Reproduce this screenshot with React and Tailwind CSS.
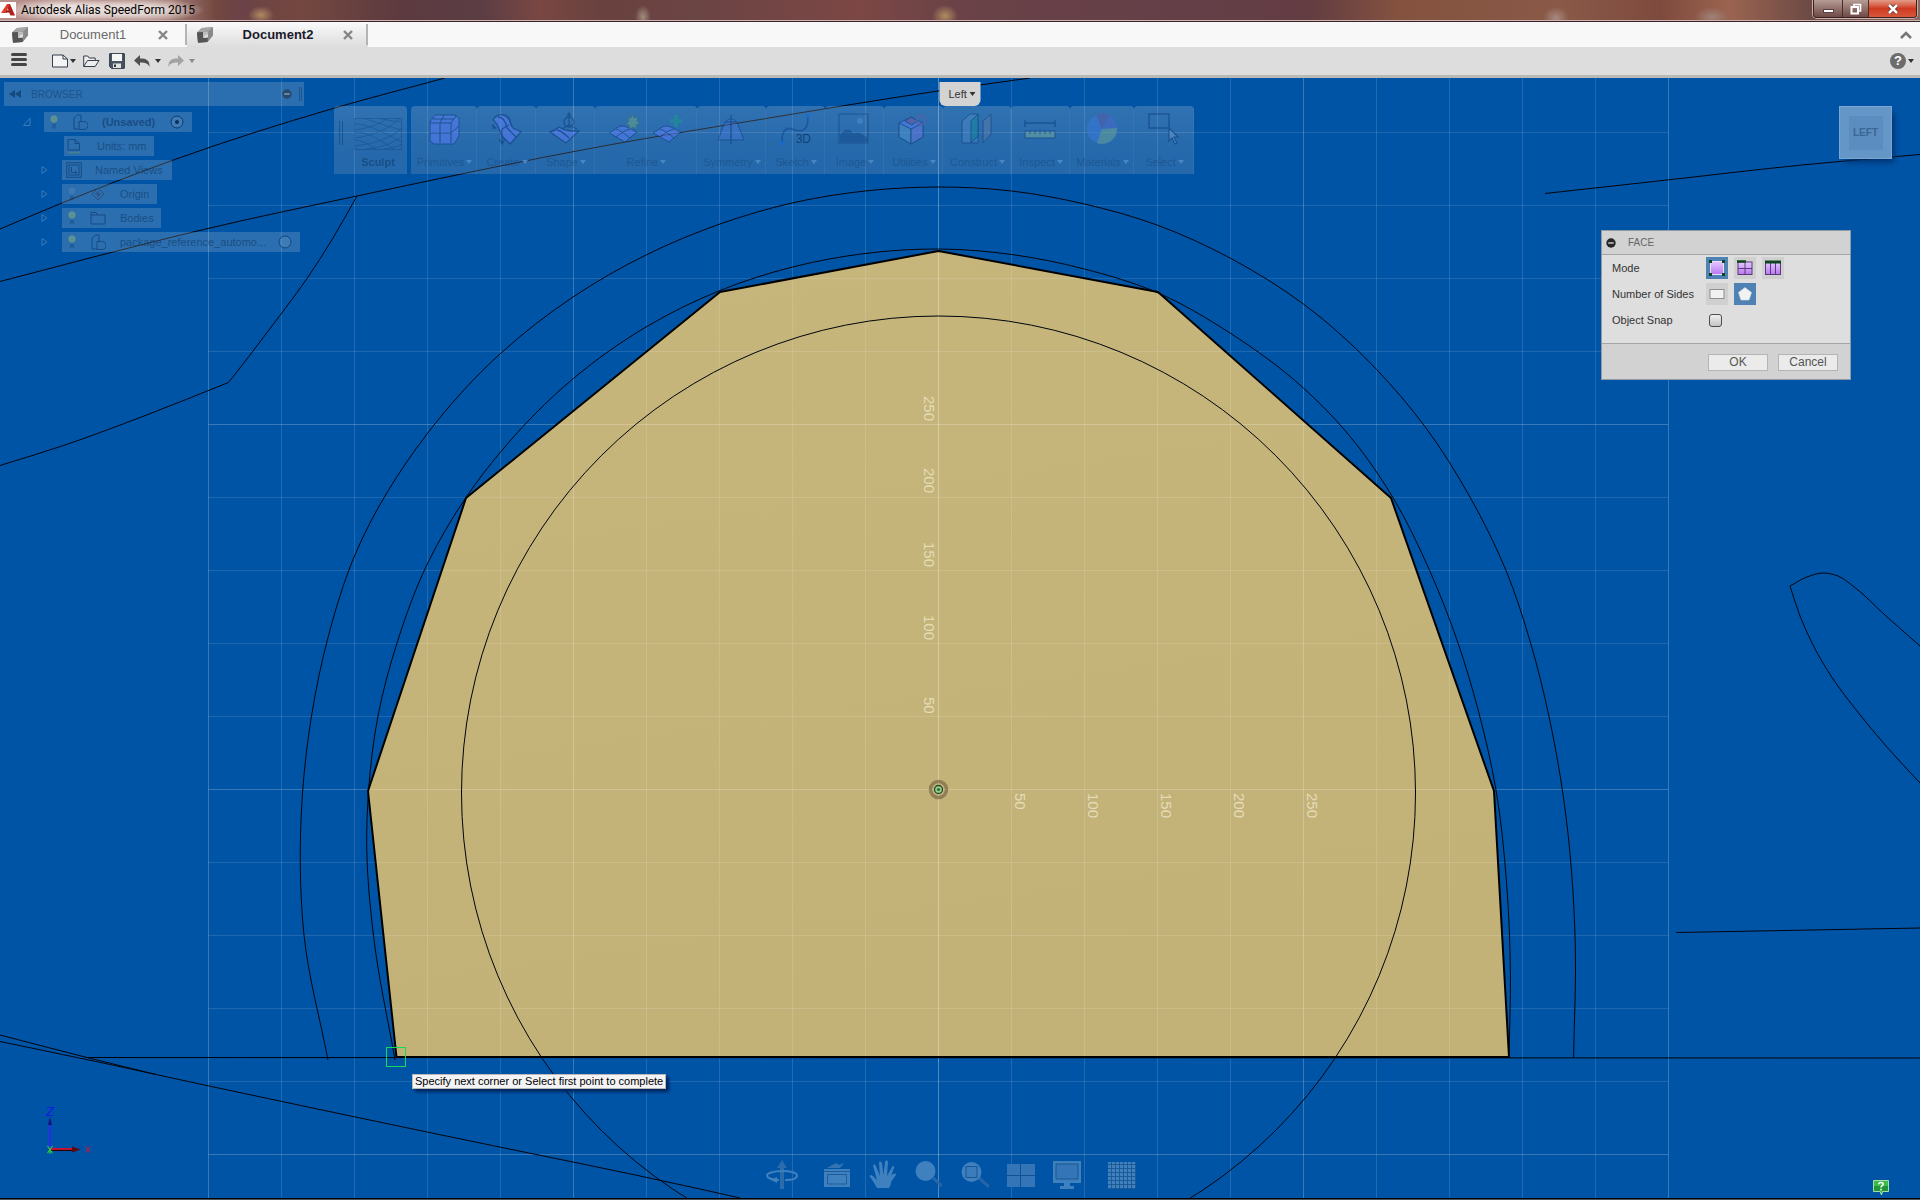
import React from "react";

/* ---------- geometry helpers ---------- */

// Smooth curve through a list of points, with tangents weighted by chord length.
function spline(points) {
  const n = points.length;
  const dist = (a, b) => Math.hypot(b[0] - a[0], b[1] - a[1]);
  const tangents = points.map((p, i) => {
    const prev = points[i - 1];
    const next = points[i + 1];
    if (!prev || !next) {
      const [a, b] = prev ? [prev, p] : [p, next];
      const d = dist(a, b);
      return [(b[0] - a[0]) / d, (b[1] - a[1]) / d];
    }
    const d1 = dist(prev, p);
    const d2 = dist(p, next);
    return [0, 1].map(
      (k) => (((p[k] - prev[k]) / d1) * d2 + ((next[k] - p[k]) / d2) * d1) / (d1 + d2)
    );
  });
  let d = `M${points[0][0]} ${points[0][1]}`;
  for (let i = 0; i < n - 1; i++) {
    const a = points[i];
    const b = points[i + 1];
    const s = dist(a, b) / 3;
    const ta = tangents[i];
    const tb = tangents[i + 1];
    d += ` C${a[0] + ta[0] * s} ${a[1] + ta[1] * s} ${b[0] - tb[0] * s} ${b[1] - tb[1] * s} ${b[0]} ${b[1]}`;
  }
  return d;
}

const ORIGIN = { x: 938.5, y: 789.5 };
const STEP = 73;

const OUTER_ARCH = [
  [328, 1060], [304, 935], [300.6, 833], [311.5, 716], [328.4, 636], [354.5, 556], [427, 434], [500.5, 353.5],
  [573, 297], [646, 255], [720, 224], [792, 203], [865, 191], [938.5, 187], [1011.6, 191], [1084.5, 204],
  [1157, 225], [1230, 258], [1303.4, 304], [1376.6, 369.5], [1426, 428], [1470.5, 498], [1506, 570.5],
  [1530.6, 643], [1549, 716.5], [1563.6, 798.5], [1575.3, 945], [1573.6, 1057.5],
];

const MIDDLE_ARCH = [
  [395, 1060], [373.4, 935], [366.7, 847], [368.6, 790], [378, 716], [397.8, 640.5], [427.3, 564], [467, 496],
  [500.5, 452], [573.4, 378.5], [646, 327], [720, 290.5], [792.6, 267], [865, 253.5], [938.5, 249], [1011.7, 254.5],
  [1084.5, 269], [1157, 292.5], [1230, 333], [1303.4, 388], [1342, 427], [1392.6, 497], [1429.6, 570.5],
  [1458, 643], [1478, 709.5], [1496, 790], [1506.5, 882], [1510.4, 973.5], [1509, 1057.5],
];

const SKETCH_CURVES = [
  [[0, 229], [62, 203], [172, 160.5], [333, 108.5], [445, 78]],
  [[0, 281.5], [82, 260], [210, 228], [357, 196], [606, 145.5], [760, 119.5], [938, 91], [1030, 78]],
  [[357, 196], [333, 238], [306, 280], [278, 318], [250, 355], [228.5, 382.5]],
  [[228.5, 382.5], [144, 416], [62, 446], [0, 465.5]],
  [[1545, 193.5], [1667, 180], [1807, 164.5], [1920, 154.5]],
  [[1790, 586], [1807, 577], [1823, 573], [1838, 576], [1853, 586], [1886, 616], [1920, 646]],
  [[1790, 586], [1800, 616], [1813, 645], [1833, 679], [1857, 711], [1886, 746], [1920, 783]],
  [[1676, 932.5], [1920, 928]],
  [[85, 1057.5], [1920, 1058]],
  [[0, 1035], [89, 1058], [156, 1074.5]],
  [[0, 1041.5], [103, 1063], [209, 1086], [427, 1132], [700, 1189], [740, 1198]],
];

const FACE_POINTS =
  "938.5,251 1158,292 1391,498 1494,791 1509,1057 396.5,1057 368,791 466,498 720,292";

const RULER_V = [
  ["250", 396], ["200", 468], ["150", 542], ["100", 615], ["50", 697],
];
const RULER_H = [
  ["50", 1015], ["100", 1088], ["150", 1161], ["200", 1234], ["250", 1307],
];

/* ---------- canvas ---------- */

function Scene() {
  const ticks = Array.from({ length: 21 }, (_, i) => i - 10);
  return (
    <svg
      className="block h-full w-full"
      viewBox="0 78 1920 1120"
      preserveAspectRatio="xMidYMid slice"
      fill="none"
      role="img"
      aria-label="Left view"
    >
      <defs>
        <linearGradient id="faceFill" x1="0" y1="0" x2="0.2" y2="1">
          <stop offset="0" stopColor="#c6b67b" />
          <stop offset="1" stopColor="#c3b277" />
        </linearGradient>
      </defs>
      <polygon points={FACE_POINTS} fill="url(#faceFill)" />
      <g stroke="#ffffff">
        {ticks.map((k) => (
          <line
            key={`v${k}`}
            x1={ORIGIN.x + k * STEP}
            x2={ORIGIN.x + k * STEP}
            y1="59.5"
            y2="1198"
            strokeOpacity={k === 0 ? 0.32 : k % 5 === 0 ? 0.22 : 0.13}
          />
        ))}
        {ticks.slice(0, 16).map((k) => (
          <line
            key={`h${k}`}
            x1={ORIGIN.x - 10 * STEP}
            x2={ORIGIN.x + 10 * STEP}
            y1={ORIGIN.y + k * STEP}
            y2={ORIGIN.y + k * STEP}
            strokeOpacity={k % 5 === 0 ? 0.22 : 0.12}
          />
        ))}
      </g>
      <g fill="#e4dcb8" fontFamily="'Liberation Sans', Arial, sans-serif" fontSize="15">
        {RULER_V.map(([t, y]) => (
          <text key={`rv${t}`} transform={`translate(924 ${y}) rotate(90)`}>{t}</text>
        ))}
        {RULER_H.map(([t, x]) => (
          <text key={`rh${t}`} transform={`translate(${x} 793) rotate(90)`}>{t}</text>
        ))}
      </g>
      <g stroke="#00040c" strokeWidth="1">
        <circle cx={ORIGIN.x} cy="793" r="477" />
        <path d={spline(OUTER_ARCH)} />
        <path d={spline(MIDDLE_ARCH)} />
        {SKETCH_CURVES.map((c, i) => (
          <path key={i} d={spline(c)} />
        ))}
      </g>
      <polygon points={FACE_POINTS} stroke="#000000" strokeWidth="2" strokeLinejoin="round" />

      {/* origin marker */}
      <circle cx={ORIGIN.x} cy={ORIGIN.y} r="8" stroke="#7b6a46" strokeOpacity="0.7" strokeWidth="3.5" />
      <circle cx={ORIGIN.x} cy={ORIGIN.y} r="4" fill="#a5c98f" stroke="#1f4a2c" strokeWidth="1.3" />
      <circle cx={ORIGIN.x} cy={ORIGIN.y} r="1.6" fill="#0d7a3c" />

      {/* snap marker */}
      <rect x="386.5" y="1047.5" width="19" height="19" stroke="#12dc55" />

      {/* axis triad */}
      <path d="M50 1149V1120" stroke="#2a2af0" strokeWidth="2" />
      <path d="M50 1117l-2 8h4z" fill="#141480" />
      <path d="M46.5 1107.500h7l-7 8h7" stroke="#1a1ae6" strokeWidth="1.2" />
      <path d="M50 1149h24" stroke="#c41230" strokeWidth="2" />
      <path d="M50 1150.500h22" stroke="#200" />
      <path d="M81 1149.500l-9-3v6z" fill="#5a0a12" />
      <path d="M85.500 1146.500l5 6m0-6l-5 6" stroke="#c2184a" strokeWidth="1.1" />
      <path d="M47.500 1146l5 7m0-7l-5 7M50 1148v6" stroke="#2ecc40" strokeWidth="1.2" />
    </svg>
  );
}

/* ---------- small shared icons ---------- */

function Caret({ className = "" }) {
  return (
    <svg className={`h-1 w-1.5 ${className}`} viewBox="0 0 6 4" aria-hidden="true">
      <path d="M0 0h6L3 4z" fill="currentColor" />
    </svg>
  );
}

function DocCube() {
  return (
    <svg className="h-4 w-4 shrink-0" viewBox="0 0 16 16" aria-hidden="true">
      <path d="M0 5.500l5-4.500 11-.8v8L10.500 15 1 15.800z" fill="#6f6f6f" />
      <path d="M0 5.500l5-4.500 11-.8-4.500 4.500z" fill="#a6a6a6" />
      <path d="M11.500 4.700L16 .2v8L10.500 15z" fill="#8a8a8a" />
      <path d="M0 5.500l6-.4v5.600l4.500-.3V15L1 15.800z" fill="#555" />
      <path d="M6 5.100l5.500-.4-.8 5.700-4.700.3z" fill="#bdbdbd" />
      <path d="M6 10.700l3-3 2.200-.2-.5 2.900z" fill="#e0e0e0" />
    </svg>
  );
}

function CloseX() {
  return (
    <svg className="h-2.5 w-2.5" viewBox="0 0 10 10" aria-hidden="true">
      <path d="M1 1l8 8M9 1L1 9" stroke="#858585" strokeWidth="2.4" />
    </svg>
  );
}

function MinusDot({ className }) {
  return (
    <svg className={className} viewBox="0 0 10 10" aria-hidden="true">
      <circle cx="5" cy="5" r="4.700" fill="#262626" />
      <path d="M2.300 5h5.400" stroke="#e4e4e4" strokeWidth="1.3" />
    </svg>
  );
}

/* ---------- window chrome ---------- */

function TitleBar() {
  return (
    <header className="relative flex h-[22px] shrink-0 items-start justify-between overflow-hidden border-b border-[#3c2226] bg-[linear-gradient(90deg,#b98f8a_0px,#a8827c_170px,#73483f_215px,#6b4247_240px,#74483f_300px,#5d3a40_400px,#5b3d44_480px,#7a4742_540px,#69423f_600px,#6b4444_700px,#7c4744_860px,#6a4248_960px,#643f47_1200px,#633d42_1310px,#84523f_1400px,#8a5947_1560px,#7e4a3d_1660px,#9a6450_1730px,#6d4a44_1810px,#8a6a62_1920px)]">
      <div className="pointer-events-none absolute inset-0 border-b border-[#c9b6b4] bg-[radial-gradient(70px_12px_at_70px_10px,#eadfdc_40%,transparent),radial-gradient(70px_12px_at_135px_10px,#e2d5d1_40%,transparent),radial-gradient(13px_9px_at_261px_15px,#b08a62,transparent),radial-gradient(8px_12px_at_643px_17px,#a08c7c,transparent),radial-gradient(13px_11px_at_945px_16px,#b08c60,transparent),radial-gradient(13px_11px_at_1556px_18px,#a68a80,transparent),radial-gradient(17px_10px_at_1712px_17px,#a08278,transparent)]" />
      <div className="relative flex h-5 items-center gap-[5px]">
        <span className="flex h-4 w-4 items-center justify-center bg-white">
          <svg className="h-3.5 w-3.5" viewBox="0 0 14 14" aria-hidden="true">
            <path d="M6 1h3l5 11.500H9.500L7.500 8z" fill="#b5201f" />
            <path d="M6 1h2.200L5.500 10H0z" fill="#e23b2a" />
            <path d="M5 9.500h4l-1.500-2H5.600z" fill="#7d1414" />
          </svg>
        </span>
        <h1 className="font-[Roboto,sans-serif] text-xs leading-5 text-black">Autodesk Alias SpeedForm 2015</h1>
      </div>
      <div className="relative mr-[3px] flex h-[18px] overflow-hidden rounded-b border border-t-0 border-[#3a2222] shadow-[0_0_0_1px_#c9b0aa]">
        <button type="button" aria-label="Minimize" className="flex w-7 items-end justify-center bg-linear-to-b from-[#b79c96] to-[#6e4a46] pb-1">
          <span className="h-1 w-[11px] border border-[#5a4040] bg-white" />
        </button>
        <button type="button" aria-label="Restore" className="flex w-[27px] items-center justify-center border-x border-[#4a2c2c] bg-linear-to-b from-[#b79c96] to-[#6e4a46]">
          <svg className="h-3 w-3" viewBox="0 0 12 12" fill="none" aria-hidden="true">
            <path d="M4 3V1.500h6.500V8H9" stroke="#fff" strokeWidth="1.6" />
            <rect x="1.500" y="4" width="6.500" height="6.500" stroke="#fff" strokeWidth="2" />
          </svg>
        </button>
        <button type="button" aria-label="Close" className="flex w-[47px] items-center justify-center bg-linear-to-b from-[#e29a88] via-[#cf3a20] to-[#d8573a]">
          <svg className="h-2.5 w-3" viewBox="0 0 12 10" aria-hidden="true">
            <path d="M2 1l8 8M10 1L2 9" stroke="#5a2a26" strokeWidth="4" />
            <path d="M2 1l8 8M10 1L2 9" stroke="#fff" strokeWidth="2.5" />
          </svg>
        </button>
      </div>
    </header>
  );
}

function Tab({ name, active }) {
  return (
    <div
      className={
        active
          ? "flex w-[181px] items-center bg-linear-to-b from-[#fafafa] to-[#dddddd] pl-2.5"
          : "flex w-[187px] items-center bg-[#f8f8f8] pl-3"
      }
    >
      <DocCube />
      <button
        type="button"
        role="tab"
        aria-selected={active}
        className={
          active
            ? "w-[130px] text-center text-[13px] leading-6 font-bold text-[#1b1b2b]"
            : "w-[130px] text-center text-[13px] leading-6 text-[#6a6a6a]"
        }
      >
        {name}
      </button>
      <button type="button" aria-label={`Close ${name}`}>
        <CloseX />
      </button>
      <span className="ml-auto h-[21px] w-0.5 bg-[#b4b4b4]" />
    </div>
  );
}

function TabStrip() {
  return (
    <div className="flex h-[25px] shrink-0 justify-between bg-[#f8f8f8]">
      <div role="tablist" className="flex">
        <Tab name="Document1" active={false} />
        <Tab name="Document2" active />
      </div>
      <button type="button" aria-label="Collapse" className="mr-2 flex items-center">
        <svg className="h-2 w-3" viewBox="0 0 12 8" fill="none" aria-hidden="true">
          <path d="M1 7l5-5 5 5" stroke="#777" strokeWidth="2.600" />
        </svg>
      </button>
    </div>
  );
}

function QuickBar() {
  return (
    <div className="flex h-[31px] shrink-0 items-center border-b-[3px] border-[#b9b9b7] bg-[#dddddd] px-[11px] text-[#333]">
      <button type="button" aria-label="Menu" className="mr-[25px] flex w-4 flex-col gap-0.5 pb-1">
        <span className="h-[3px] rounded-full bg-[#444]" />
        <span className="h-[3px] rounded-full bg-[#444]" />
        <span className="h-[3px] rounded-full bg-[#444]" />
      </button>
      <button type="button" aria-label="New" className="mr-[7px] flex items-center gap-0.5">
        <svg className="h-3.5 w-4" viewBox="0 0 16 14" aria-hidden="true">
          <path d="M.5 1h10.500l4.500 4v8H.5z" fill="#f4f4f4" stroke="#333d4c" />
          <path d="M11 1v4h4.500" fill="none" stroke="#333d4c" />
        </svg>
        <Caret />
      </button>
      <button type="button" aria-label="Open" className="mr-[9px]">
        <svg className="h-3.5 w-[17px]" viewBox="0 0 17 14" fill="#eee" stroke="#333d4c" aria-hidden="true">
          <path d="M.7 12.500V2h4l1.500 2h6v2" />
          <path d="M.7 12.500L4.500 6.500H16l-3.800 6z" />
        </svg>
      </button>
      <button type="button" aria-label="Save" className="mr-[9px]">
        <svg className="h-4 w-4" viewBox="0 0 16 16" aria-hidden="true">
          <path d="M.7.700h14.600v14.600H2.500L.7 13.500z" fill="#4a5664" stroke="#27303c" />
          <path d="M3 1h10v7H3z" fill="#f6f6f6" />
          <path d="M4 10.500h8V15H4z" fill="#e4e4e4" />
          <path d="M5 11.500h2V14H5z" fill="#333" />
        </svg>
      </button>
      <button type="button" aria-label="Undo" className="mr-[7px] flex items-center gap-[5px]">
        <svg className="h-3 w-4" viewBox="0 0 16 12" aria-hidden="true">
          <path d="M0 5.500L6 0v3.500c6 0 10 1.500 9.500 8.500-1.500-3.500-4-4.500-9.500-4.500V11z" fill="#505050" />
        </svg>
        <Caret />
      </button>
      <button type="button" aria-label="Redo" className="flex items-center gap-[5px] text-[#8a8a8a]">
        <svg className="h-3 w-4" viewBox="0 0 16 12" aria-hidden="true">
          <path d="M16 5.500L10 0v3.500C4 3.500 0 5 .5 12c1.500-3.500 4-4.500 9.500-4.500V11z" fill="#a2a2a2" />
        </svg>
        <Caret />
      </button>
      <button type="button" aria-label="Help" className="-mr-[5px] ml-auto flex items-center gap-0.5">
        <span className="flex h-4 w-4 items-center justify-center rounded-full bg-[#6c6c6c] text-[13px] leading-4 font-bold text-white">
          ?
        </span>
        <Caret />
      </button>
    </div>
  );
}

/* ---------- browser panel ---------- */

function Bulb({ lit = true }) {
  return (
    <svg className="h-4 w-3 shrink-0 opacity-50" viewBox="0 0 12 16" aria-hidden="true">
      <circle cx="6" cy="5" r="4.200" fill={lit ? "#a8c870" : "#8fb4d8"} fillOpacity={lit ? 0.75 : 0.3} stroke="#1d5a94" strokeOpacity=".7" />
      <path d="M4 10h4v3.500L6 15l-2-1.500z" fill="#12406e" fillOpacity=".7" />
    </svg>
  );
}

const TREE_ICONS = {
  component: (
    <path d="M2 4l3.500-3H9v6.500M2 4v11h5V7.500h4.500c3 0 4.500 1.500 4.500 4S14.500 15.500 12 15.500H7" />
  ),
  units: (
    <>
      <path d="M2 1.500h7l4.500 4V12H2zM9 1.500v4h4.500" />
      <path d="M2 14.500h12" stroke="#4f8a7a" strokeWidth="1.500" />
    </>
  ),
  views: (
    <>
      <rect x=".7" y=".7" width="14.600" height="14.600" />
      <rect x="3" y="3" width="10" height="10" />
      <path d="M5.500 5v5.500H11M9 9l2 1.500L9 12" />
    </>
  ),
  origin: <path d="M8 2l6 6-6 6-6-6zM8 5v6M5 8h6M6.500 6.500l3 3" stroke="#2f4468" />,
  folder: <path d="M1 14V2.500h5l1.500 2.500H15v9zM1 5h6.500" />,
};

function TreeIcon({ kind }) {
  return (
    <svg className="h-4 w-4 shrink-0 opacity-70" viewBox="0 0 16 16" fill="none" stroke="#0d3d70" aria-hidden="true">
      {TREE_ICONS[kind]}
    </svg>
  );
}

function Radio({ checked, label }) {
  return (
    <button type="button" aria-label={label} className="ml-auto">
      <svg className="h-3.5 w-3.5" viewBox="0 0 14 14" fill="none" aria-hidden="true">
        <circle cx="7" cy="7" r="6" stroke={checked ? "#0c3a6c" : "#0e4682"} fill="#5a92c6" fillOpacity=".4" />
        {checked && <circle cx="7" cy="7" r="2" fill="#0a2f5c" />}
      </svg>
    </button>
  );
}

function TreeRow({ margin, box, expand, children }) {
  return (
    <li className={`flex h-5 items-center ${margin}`}>
      <span className="flex w-[21px] shrink-0">
        {expand && (
          <button type="button" aria-label={expand === "open" ? "Collapse" : "Expand"}>
            <svg className="h-2.5 w-2" viewBox="0 0 8 10" fill="none" aria-hidden="true">
              <path d={expand === "open" ? "M7 1v7.500H.5z" : "M1 1.500L6 5 1 8.500z"} stroke="#3c7ab6" />
            </svg>
          </button>
        )}
      </span>
      <div className={`flex h-5 items-center bg-[#dcdcdc]/20 text-[11px] text-[#0b3565]/60 ${box}`}>{children}</div>
    </li>
  );
}

function BrowserPanel() {
  return (
    <nav aria-label="Browser" className="absolute top-1 left-1 w-[300px]">
      <div className="flex h-6 items-center bg-[#dcdcdc]/20 pl-[5px] text-[#0b3565]/50">
        <svg className="h-2 w-3" viewBox="0 0 12 8" aria-hidden="true">
          <path d="M6 0v8L0 4zM12 0v8L6 4z" fill="#0c3a6c" fillOpacity=".7" />
        </svg>
        <h2 className="ml-2.5 text-[10px]">BROWSER</h2>
        <button type="button" aria-label="Minimize browser" className="ml-auto opacity-50">
          <MinusDot className="h-2.5 w-2.5" />
        </button>
        <span className="mr-0.5 ml-[7px] h-3.5 w-[3px] border-x border-[#1b5490]" />
      </div>
      <ul className="mt-1.5 flex flex-col gap-1">
        <TreeRow margin="ml-[19px]" box="w-[148px] pr-2 pl-1" expand="open">
          <Bulb />
          <span className="w-3" />
          <TreeIcon kind="component" />
          <span className="ml-3.5 font-bold">(Unsaved)</span>
          <Radio checked label="Activate root" />
        </TreeRow>
        <TreeRow margin="ml-[39px]" box="w-[90px] pl-0.5">
          <TreeIcon kind="units" />
          <span className="ml-[15px]">Units: mm</span>
        </TreeRow>
        <TreeRow margin="ml-[37px]" box="w-[110px] pl-1" expand="closed">
          <TreeIcon kind="views" />
          <span className="ml-[13px]">Named Views</span>
        </TreeRow>
        <TreeRow margin="ml-[37px]" box="w-[95px] pl-1" expand="closed">
          <Bulb lit={false} />
          <span className="w-3" />
          <TreeIcon kind="origin" />
          <span className="ml-3.5">Origin</span>
        </TreeRow>
        <TreeRow margin="ml-[37px]" box="w-[99px] pl-1" expand="closed">
          <Bulb />
          <span className="w-3" />
          <TreeIcon kind="folder" />
          <span className="ml-3.5">Bodies</span>
        </TreeRow>
        <TreeRow margin="ml-[37px]" box="w-[238px] pr-2 pl-1" expand="closed">
          <Bulb />
          <span className="w-3" />
          <TreeIcon kind="component" />
          <span className="ml-3.5">package_reference_automo...</span>
          <Radio label="Activate package reference" />
        </TreeRow>
      </ul>
    </nav>
  );
}

/* ---------- tool ribbon ---------- */

const INK = "#0a3a78";
const VIOLET = "#5f7fff";

const TOOL_ART = {
  primitives: (
    <g stroke={INK}>
      <path d="M2 9l5-7h20l4 3v18l-5 8H6l-4-3z" fill={VIOLET} />
      <path d="M2 10h21l5-7M23 10v20M12 10l4-8M12 10v20M5 6h21M2 20h21l8-7" fill="none" />
    </g>
  ),
  create: (
    <g stroke={INK} strokeWidth="1.300">
      <path d="M3 7c3-6 12-7 15-3 3 4 3 9 5 11l8 4-11 12-8-8c-3-5-3-12-9-16z" fill={VIOLET} />
      <path d="M2 12l4 3M3 11v4h3M12 16v14m-3-4l3 5 3-5M8 4c6 0 8 6 9 11l9 9M13 2c6 1 7 7 9 12M12 16l7-4" fill="none" />
    </g>
  ),
  shape: (
    <g stroke={INK} strokeWidth="1.300">
      <path d="M1 19c4-1 7-3 9-5 6 4 12 4 20 4L17 30z" fill={VIOLET} />
      <circle cx="20" cy="9" r="5" fill="none" />
      <path d="M20 0v12m-2-9l2-3 2 3M20 12l8 4M20 12l-7 4M8 17c5 1 8 4 12 8" fill="none" />
    </g>
  ),
  refine: (
    <g stroke={INK}>
      <path d="M1 20c5-2 8-7 13-7 5 0 10 4 15 6L17 29z" fill={VIOLET} />
      <path d="M8 24c4-3 9-7 14-8M8 16c4 1 10 6 14 9" fill="none" />
      <path d="M24 1l2 4 4-1-1 4 3 2-4 2 1 4-4-2-3 2-1-4-3-1 3-3-1-4 3 1z" fill="#6fa88a" stroke="#3f7a5a" />
    </g>
  ),
  refineAdd: (
    <g stroke={INK}>
      <path d="M1 20c5-2 8-7 13-7 5 0 10 4 15 6L17 29z" fill={VIOLET} />
      <path d="M8 24c4-3 9-7 14-8M8 16c4 1 10 6 14 9" fill="none" />
      <path d="M22 2h4v4h4v4h-4v4h-4v-4h-4V6h4z" fill="#1a9c8c" stroke="none" />
    </g>
  ),
  symmetry: (
    <g stroke={INK} fill="none">
      <path d="M10 9c4-4 8-4 12 0l7 18H3z" fill={VIOLET} fillOpacity=".5" />
      <path d="M16 2v29M10 9h12" strokeWidth="1.400" />
    </g>
  ),
  sketch: (
    <g stroke="#0a3f94" fill="none" strokeWidth="1.600">
      <path d="M3 29c0-12 4-15 10-13s16 6 16-12" />
      <rect x="27" y="1" width="4" height="4" fill="#0b6ae0" stroke="none" />
      <rect x="1" y="28" width="4" height="4" fill="#0b6ae0" stroke="none" />
    </g>
  ),
  image: (
    <g>
      <rect x="1" y="1" width="29" height="29" fill="none" stroke={INK} />
      <path d="M2 29V22c6-8 10-6 14-1 3-3 6-1 14 4v4z" fill={INK} fillOpacity=".7" />
      <circle cx="22" cy="8" r="3" fill="#7fb2e8" fillOpacity=".5" />
    </g>
  ),
  utilities: (
    <g stroke={INK}>
      <path d="M2 10l12-6 12 6v14l-12 7-12-7z" fill={VIOLET} />
      <path d="M2 10l12 6v15L2 24z" fill="#5296d0" />
      <path d="M14 16l12-6v14l-12 7z" fill="#6a78e0" />
      <path d="M8 8l6-4 6 4-5 4z" fill="#7c5aa0" />
      <circle cx="24" cy="7" r="4.500" fill="none" stroke="#6a5aa8" strokeWidth="2" />
    </g>
  ),
  construct: (
    <g stroke={INK}>
      <path d="M1 8l8-7h8v29H1z" fill="#7fb2e8" fillOpacity=".4" />
      <path d="M10 8l7-7v22l-7 7z" fill="#158a9a" />
      <path d="M22 8l8-7v20l-8 9z" fill="#7a86a0" fillOpacity=".6" />
    </g>
  ),
  inspect: (
    <g stroke={INK}>
      <path d="M1 10h30M1 7v7M31 7v7" fill="none" strokeWidth="1.400" />
      <rect x="1" y="18" width="30" height="7" fill="#7cae9a" />
      <path d="M6 18v3M11 18v3M16 18v3M21 18v3M26 18v3" />
    </g>
  ),
  materials: (
    <g>
      <circle cx="16" cy="16" r="15" fill="#3a7ae0" />
      <path d="M16 16L10 2a15 15 0 0 1 14 0z" fill="#5a58a8" />
      <path d="M16 16L24 3a15 15 0 0 1 7 12z" fill="#4a68d0" />
      <path d="M16 16l15-1a15 15 0 0 1-20 15z" fill="#6ca894" />
    </g>
  ),
  select: (
    <g stroke={INK} fill="none">
      <rect x="1" y="1" width="20" height="14" strokeWidth="1.400" />
      <path d="M21 15v13l3-3 3 6 2-1-3-6h4z" fill="#6ca0d2" strokeWidth="1.200" />
    </g>
  ),
};

function ToolArt({ name }) {
  return (
    <svg className="h-8 w-8 overflow-visible opacity-50" viewBox="0 0 32 32" aria-hidden="true">
      {TOOL_ART[name]}
    </svg>
  );
}

const TOOLS = [
  { label: "Primitives", icons: ["primitives"], width: "w-[66px]" },
  { label: "Create", icons: ["create"], width: "w-[59px]" },
  { label: "Shape", icons: ["shape"], width: "w-[59px]" },
  { label: "Refine", icons: ["refine", "refineAdd"], width: "w-[102px]" },
  { label: "Symmetry", icons: ["symmetry"], width: "w-[69px]" },
  { label: "Sketch", icons: ["sketch"], width: "w-[59px]", tag: "3D" },
  { label: "Image", icons: ["image"], width: "w-[59px]" },
  { label: "Utilities", icons: ["utilities"], width: "w-[59px]" },
  { label: "Construct", icons: ["construct"], width: "w-[68px]" },
  { label: "Inspect", icons: ["inspect"], width: "w-[59px]" },
  { label: "Materials", icons: ["materials"], width: "w-[64px]" },
  { label: "Select", icons: ["select"], width: "w-[60px]" },
];

function Ribbon() {
  return (
    <div role="toolbar" aria-label="Tools" className="absolute top-7 left-[334px] flex gap-1 text-[11px] text-[#0b3565]/35">
      <div className="flex h-[68px] w-[73px] rounded-t bg-linear-to-b from-[#dcdcdc]/22 to-[#a8b4c0]/22 to-70%">
        <span className="mt-[15px] ml-[5px] h-6 w-1 border-x border-[#0c3a6c]/50" />
        <button type="button" className="flex flex-1 flex-col items-center pt-3 pl-1.5">
          <svg className="h-8 w-12 opacity-40" viewBox="0 0 48 32" fill="none" stroke={INK} aria-hidden="true">
            <rect x=".5" y=".5" width="47" height="31" strokeWidth=".8" />
            <path d="M0 6c14 0 24 6 48 18M0 14c14 0 22 6 40 17M0 22c8 0 14 4 22 9M8 0c14 4 24 8 40 12M24 0c8 2 14 3 24 4M0 12C16 10 26 6 34 0M0 20C20 18 36 10 46 0M0 28C20 26 38 20 48 10M12 31c14-1 28-6 36-13M30 31c8-1 12-2 18-5" strokeWidth=".8" />
          </svg>
          <span className="mt-0.5 text-[11px] leading-5 font-bold text-[#0b3565]/55">Sculpt</span>
        </button>
      </div>
      <div className="flex">
        {TOOLS.map((t) => (
          <button
            key={t.label}
            type="button"
            aria-haspopup="menu"
            className={`flex h-[68px] flex-col rounded-t border-r border-white/5 bg-linear-to-b from-[#dcdcdc]/22 to-[#a8b4c0]/22 to-70% pt-[7px] ${t.width}`}
          >
            <span className="relative flex w-full justify-center gap-3">
              {t.icons.map((n) => (
                <ToolArt key={n} name={n} />
              ))}
              {t.tag && (
                <span className="absolute right-[13px] bottom-0 text-xs leading-3 text-[#0b3565]/80">{t.tag}</span>
              )}
            </span>
            <span className="mt-[7px] flex w-full items-center justify-center gap-0.5 pl-0.5 leading-5">
              {t.label}
              <Caret className="shrink-0 text-[#4a86c0]" />
            </span>
          </button>
        ))}
      </div>
    </div>
  );
}

/* ---------- face dialog ---------- */

function ModeButton({ label, pressed, children }) {
  return (
    <button
      type="button"
      aria-label={label}
      aria-pressed={pressed}
      className={
        pressed
          ? "flex h-[22px] w-[22px] items-center justify-center bg-[#4f82b4]"
          : "flex h-[22px] w-[22px] items-center justify-center bg-[#d0d0d0]"
      }
    >
      <svg className="h-4 w-4" viewBox="0 0 16 16" aria-hidden="true">
        {children}
      </svg>
    </button>
  );
}

function FaceDialog() {
  return (
    <section
      aria-label="Face"
      className="absolute top-[152px] right-[69px] w-[250px] border border-[#8f9aa6] bg-[#dedede] text-[11px] text-[#333]"
    >
      <svg className="absolute h-0 w-0" aria-hidden="true">
        <defs>
          <linearGradient id="violet" x1="0" y1="0" x2="0" y2="1">
            <stop offset="0" stopColor="#e4c8ff" />
            <stop offset="1" stopColor="#b878f0" />
          </linearGradient>
        </defs>
      </svg>
      <div className="flex h-6 items-center border-b border-[#a4a4a4] bg-[#d2d2d2] pl-1">
        <button type="button" aria-label="Collapse face options">
          <MinusDot className="h-2.5 w-2.5" />
        </button>
        <h2 className="ml-3 text-[10px] text-[#666]">FACE</h2>
      </div>
      <div className="flex h-[88px] flex-col gap-1 px-2.5 pt-0.5">
        <div role="group" aria-label="Mode" className="flex h-[22px] items-center">
          <span className="w-[94px]">Mode</span>
          <div className="flex gap-1.5">
            <ModeButton label="Simple" pressed>
              <rect x="1.500" y="1.500" width="13" height="13" fill="url(#violet)" stroke="#eadff6" />
              <path d="M0 0h3v3H0zM13 0h3v3h-3zM0 13h3v3H0zM13 13h3v3h-3z" fill="#0f4420" />
            </ModeButton>
            <ModeButton label="Edge" pressed={false}>
              <rect x="1" y="2" width="14" height="12.500" fill="url(#violet)" stroke="#5a3a78" />
              <path d="M8 3v11M1 8.500h14" stroke="#5a3a78" />
              <path d="M0 1.500h9" stroke="#0f4420" strokeWidth="2.500" />
            </ModeButton>
            <ModeButton label="Chain" pressed={false}>
              <rect x=".5" y="2" width="15" height="12.500" fill="url(#violet)" stroke="#5a3a78" />
              <path d="M5.500 3v11M10.500 3v11" stroke="#5a3a78" />
              <path d="M0 2h16" stroke="#0f4420" strokeWidth="3" />
            </ModeButton>
          </div>
        </div>
        <div role="group" aria-label="Number of Sides" className="flex h-[22px] items-center">
          <span className="w-[94px]">Number of Sides</span>
          <div className="flex gap-1.5">
            <ModeButton label="Four" pressed={false}>
              <rect x="1" y="3.500" width="14" height="9" fill="#f2f2f2" stroke="#8e8e8e" />
            </ModeButton>
            <ModeButton label="Multiple" pressed>
              <path d="M8 1.500l6.500 5L12 14H4L1.500 6.500z" fill="#f2f2f2" stroke="#d4dce4" strokeWidth=".6" />
            </ModeButton>
          </div>
        </div>
        <div className="flex h-[22px] items-center">
          <label htmlFor="object-snap" className="w-[97px]">Object Snap</label>
          <input
            id="object-snap"
            type="checkbox"
            className="h-[13px] w-[13px] appearance-none rounded-[3px] border border-[#4c4c4c] bg-linear-to-b from-[#f0f0f0] to-[#c4c4c4]"
          />
        </div>
      </div>
      <div className="flex h-9 items-center justify-end gap-2.5 border-t border-[#a4a4a4] bg-[#d2d2d2] pt-0.5 pr-3 text-xs text-[#555]">
        <button type="button" className="h-[17px] w-[60px] border border-[#b4b4b4] bg-[#ebebeb] leading-[15px]">OK</button>
        <button type="button" className="h-[17px] w-[60px] border border-[#b4b4b4] bg-[#ebebeb] leading-[15px]">Cancel</button>
      </div>
    </section>
  );
}

/* ---------- view controls ---------- */

function ViewSelect() {
  return (
    <div className="absolute top-1 left-1/2 flex h-6 w-[41px] -translate-x-1/2 items-center rounded-b-md bg-[#d3d3d3] pl-[9px] text-[#333]">
      <select aria-label="View" className="absolute inset-0 w-full appearance-none bg-transparent pl-[9px] text-[11px]" defaultValue="Left">
        <option>Left</option>
        <option>Right</option>
        <option>Front</option>
        <option>Back</option>
        <option>Top</option>
        <option>Bottom</option>
      </select>
      <Caret className="pointer-events-none relative mr-[5px] ml-auto" />
    </div>
  );
}

function ViewCube() {
  return (
    <button
      type="button"
      className="absolute top-7 right-7 flex h-[53px] w-[53px] items-center justify-center border border-[#7ba6d0] bg-[#6496c8] text-[10px] font-bold text-[#3a6594] shadow-[4px_5px_6px_-2px_#00316c]"
    >
      <span className="flex h-[34px] w-[34px] items-center justify-center bg-[#5b8dc0]">LEFT</span>
    </button>
  );
}

const NAV_ICONS = [
  {
    label: "Orbit",
    size: "w-8 mr-[26px]",
    box: "0 0 32 30",
    art: (
      <>
        <path d="M16 0l5 8h-3v21h-4V8h-3z" fill="#2d6cab" />
        <path d="M13 20C5 20 1 17.500 1 15.500S7 11 16 11s15 2 15 4.500S27 20 19 20" fill="none" stroke="currentColor" strokeWidth="2" />
        <path d="M5 20l6-3v6z" fill="currentColor" />
      </>
    ),
  },
  {
    label: "Look at",
    size: "w-[26px] mr-[19px]",
    box: "0 0 26 30",
    art: (
      <>
        <path d="M3 8l9-5 3 2 5-2-4 5z" fill="#3474b4" />
        <path d="M0 9h26v18H0z" fill="currentColor" />
        <path d="M3.500 14.500h19v9.500h-19zM0 11.500h26" fill="none" stroke="#1f5c9c" />
      </>
    ),
  },
  {
    label: "Pan",
    size: "w-7 mr-[18px]",
    box: "0 0 28 30",
    art: (
      <path
        d="M8 28c-2-3-3-6-7-11-1-2 1-3 3-1l4 4L4 6c0-2 2-2 3 0l4 10-1-13c0-2 2-2 3 0l1.500 12L16 2c0-2 3-2 3 0l-1 14 5-9c1-2 3-1 2 1l-3 8c1-2 5-4 5-1l-5 7c0 3-1 4-2 6z"
        fill="currentColor"
      />
    ),
  },
  {
    label: "Zoom",
    size: "w-[27px] mr-[19px]",
    box: "0 0 27 30",
    art: (
      <>
        <path d="M18 18l9 8" stroke="#2a66a6" strokeWidth="3" />
        <circle cx="10.500" cy="11" r="10" fill="currentColor" />
      </>
    ),
  },
  {
    label: "Fit",
    size: "w-7 mr-[18px]",
    box: "0 0 28 30",
    art: (
      <>
        <path d="M18 18l10 9" stroke="#2a66a6" strokeWidth="3" />
        <circle cx="10.500" cy="12" r="10" fill="currentColor" />
        <rect x="5" y="6.500" width="11" height="11" fill="#3a7cbc" stroke="#1a5696" />
      </>
    ),
  },
  {
    label: "Viewports",
    size: "w-7 mr-[18px]",
    box: "0 0 28 30",
    art: (
      <>
        <path d="M0 4h13v11H0zM14 4h14v11H14zM0 16h13v11H0zM14 16h14v11H14z" fill="#3375b6" />
        <path d="M13.500 4v23M0 15.500h28" stroke="#14508f" />
      </>
    ),
  },
  {
    label: "Display",
    size: "w-7 mr-[27px]",
    box: "0 0 28 30",
    art: (
      <>
        <path d="M0 1h28v22H0zM11 23h6v3h4v3H7v-3h4z" fill="currentColor" />
        <rect x="3" y="4" width="22" height="15" fill="#3375b6" stroke="#1a5696" />
      </>
    ),
  },
  {
    label: "Grid",
    size: "w-7",
    box: "0 0 28 30",
    art: (
      <>
        <path d="M0 2h28v27H0z" fill="currentColor" />
        <path
          d="M3.500 2v27M7.500 2v27M11.500 2v27M15.500 2v27M19.500 2v27M23.500 2v27M27.500 2v27M0 4.500h28M0 8.500h28M0 12.500h28M0 16.500h28M0 20.500h28M0 24.500h28M0 28.500h28"
          stroke="#17538f"
          strokeOpacity=".8"
        />
      </>
    ),
  },
];

function NavBar() {
  return (
    <div role="toolbar" aria-label="Navigation" className="absolute inset-x-0 bottom-2 flex justify-center pr-[18px] text-[#3f80bf]">
      {NAV_ICONS.map((n) => (
        <button key={n.label} type="button" aria-label={n.label} className={`h-[30px] ${n.size}`}>
          <svg className="h-full w-full" viewBox={n.box} aria-hidden="true">
            {n.art}
          </svg>
        </button>
      ))}
    </div>
  );
}

function HelpBalloon() {
  return (
    <button type="button" aria-label="Assistant" className="absolute right-[31px] bottom-0.5">
      <svg className="block h-4 w-4" viewBox="0 0 16 16" aria-hidden="true">
        <path d="M.5.500h15v11H9.500L8.500 15 7 11.500H.5z" fill="#41b84a" stroke="#a6e0a8" />
        <path d="M1 6h14v5H1z" fill="#23963a" />
        <path d="M5.800 4.200c0-2.400 4.400-2.400 4.400 0 0 1.500-2.200 1.500-2.200 3.300M8 8.800v1.600" fill="none" stroke="#fff" strokeWidth="1.500" />
      </svg>
    </button>
  );
}

export default function App() {
  return (
    <div className="flex h-screen flex-col overflow-hidden bg-[#0054a6] font-['Liberation_Sans',Arial,sans-serif]">
      <TitleBar />
      <TabStrip />
      <QuickBar />
      <main className="relative min-h-0 flex-1 overflow-hidden bg-[#0054a6]">
        <Scene />
        <BrowserPanel />
        <Ribbon />
        <ViewSelect />
        <ViewCube />
        <FaceDialog />
        <div
          role="tooltip"
          className="absolute top-[996px] left-[412px] h-[15px] border border-[#b8b8b8] bg-[#f4f4f6] px-0.5 text-[11px] leading-[13px] whitespace-nowrap text-black shadow-[3px_3px_3px_#00265c]"
        >
          Specify next corner or Select first point to complete
        </div>
        <NavBar />
        <HelpBalloon />
      </main>
      <footer className="h-0.5 shrink-0 border-t border-black bg-[#4a5058]" />
    </div>
  );
}
